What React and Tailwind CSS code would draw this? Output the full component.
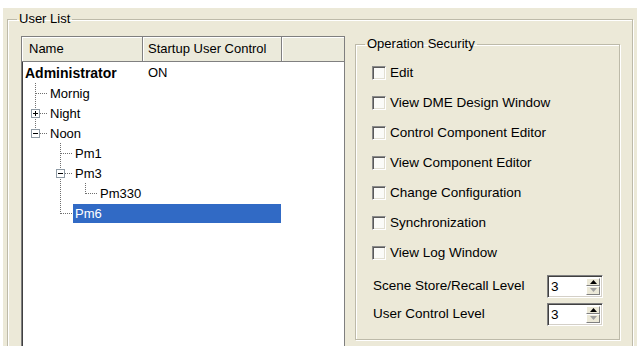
import React from 'react';

// dotted tree guide: one 25px cell of the indent column
function Guide({ type, box }) {
  const dot = { stroke: '#6F6F6F', strokeDasharray: '1 1', strokeWidth: 1, shapeRendering: 'crispEdges' };
  return (
    <svg width="25" height="20" className="shrink-0">
      {(type === 'pipe' || type === 'tee') && <line x1="10.5" y1="0" x2="10.5" y2="20" {...dot} />}
      {type === 'elbow' && <line x1="10.5" y1="0" x2="10.5" y2="11" {...dot} />}
      {(type === 'tee' || type === 'elbow') && <line x1="11" y1="10.5" x2="23" y2="10.5" {...dot} />}
      {box && (
        <g shapeRendering="crispEdges">
          <rect x="6.5" y="6.5" width="8" height="8" fill="white" stroke="#8E9AA4" />
          <line x1="8" y1="10.5" x2="13" y2="10.5" stroke="#000" />
          {box === 'plus' && <line x1="10.5" y1="8" x2="10.5" y2="13" stroke="#000" />}
        </g>
      )}
    </svg>
  );
}

const rows = [
  { name: 'Administrator', cells: [], bold: true, control: 'ON' },
  { name: 'Mornig', cells: [['tee']] },
  { name: 'Night', cells: [['tee', 'plus']] },
  { name: 'Noon', cells: [['elbow', 'minus']] },
  { name: 'Pm1', cells: [['blank'], ['tee']] },
  { name: 'Pm3', cells: [['blank'], ['tee', 'minus']] },
  { name: 'Pm330', cells: [['blank'], ['pipe'], ['elbow']] },
  { name: 'Pm6', cells: [['blank'], ['elbow']], selected: true },
];

const permissions = [
  'Edit',
  'View DME Design Window',
  'Control Component Editor',
  'View Component Editor',
  'Change Configuration',
  'Synchronization',
  'View Log Window',
];

function Checkbox() {
  return (
    <div className="w-[14px] h-[14px] shrink-0 bg-[#FBFBF8] border border-t-[#8A8A8A] border-l-[#8A8A8A] border-b-white border-r-white shadow-[inset_1px_1px_0_#5A5A5A,inset_-1px_-1px_0_#E2DFD2]" />
  );
}

function SpinBox({ value }) {
  return (
    <div className="w-[56px] h-[23px] flex bg-white border border-t-[#808080] border-l-[#808080] border-b-white border-r-white shadow-[inset_1px_1px_0_#404040,inset_-1px_-1px_0_#D4D0C8] p-[2px]">
      <div className="flex-1 pl-[1px] leading-[17px]">{value}</div>
      <div className="w-[14px] flex flex-col">
        <div className="h-[9px] flex items-center justify-center bg-[#ECE9D8] border border-t-white border-l-white border-b-[#808080] border-r-[#808080]">
          <svg width="7" height="4"><path d="M3.5 0 L7 4 L0 4 Z" fill="#000" /></svg>
        </div>
        <div className="h-[9px] flex items-center justify-center bg-[#ECE9D8] border border-t-white border-l-white border-b-[#808080] border-r-[#808080]">
          <svg width="7" height="4"><path d="M0 0 L7 0 L3.5 4 Z" fill="#A0A0A0" /></svg>
        </div>
      </div>
    </div>
  );
}

function UserTree() {
  return (
    <div className="w-[324px] h-[330px] shrink-0 bg-white border border-[#7F7F7F] shadow-[inset_1px_1px_0_#404040]">
      {/* column header */}
      <div className="flex h-[25px] bg-[#EBEADB]">
        <div className="w-[121px] pl-[7px] flex items-center border-r border-b border-[#808080] shadow-[inset_1px_1px_0_white]">Name</div>
        <div className="w-[139px] pl-[5px] flex items-center border-r border-b border-[#808080] shadow-[inset_1px_1px_0_white]">Startup User Control</div>
        <div className="flex-1 border-b border-[#808080] shadow-[inset_1px_1px_0_white]" />
      </div>
      <div className="pt-[1px]">
        {rows.map((r) => (
          <div key={r.name} className="flex h-[20px] items-center">
            <div className="w-[121px] shrink-0 flex items-center pl-[3px] h-full">
              {r.cells.map(([type, box], i) => (
                <Guide key={i} type={type} box={box} />
              ))}
              <span
                className={`shrink-0 -ml-[2px] pl-[2px] h-[19px] leading-[19px] ${r.bold ? 'font-bold text-[14px]' : ''} ${r.selected ? 'w-[208px] bg-[#316AC5] text-white' : ''}`}
              >
                {r.name}
              </span>
            </div>
            {r.control && <div className="pl-[5px]">{r.control}</div>}
          </div>
        ))}
      </div>
    </div>
  );
}

function OperationSecurity() {
  return (
    <fieldset className="w-[265px] shrink-0 p-0 m-0 border border-[#BDBAA9] shadow-[inset_1px_1px_0_white,1px_1px_0_white]">
      <legend className="ml-[9px] px-[2px] leading-[16px]">Operation Security</legend>
      <div className="pl-[16px] pr-[16px] pt-[6px] pb-[11px] text-[13.5px]">
        {permissions.map((p) => (
          <div key={p} className="h-[30px] flex items-center gap-[4px]">
            <Checkbox />
            <span>{p}</span>
          </div>
        ))}
        <div className="mt-[4px] h-[28px] flex items-center justify-between">
          <span className="pl-[1px]">Scene Store/Recall Level</span>
          <SpinBox value="3" />
        </div>
        <div className="h-[28px] flex items-center justify-between">
          <span className="pl-[1px]">User Control Level</span>
          <SpinBox value="3" />
        </div>
      </div>
    </fieldset>
  );
}

export default function App() {
  return (
    <div className="w-[637px] h-[346px] overflow-hidden bg-white pl-[3px] pt-[8px] font-['Liberation_Sans',Arial,sans-serif] text-[13px] text-black">
      <div className="h-[338px] bg-[#ECE9D8] pl-[4px] pt-[3px] overflow-hidden">
        <fieldset className="w-[626px] p-0 m-0 border border-[#BDBAA9] shadow-[inset_1px_1px_0_white,1px_1px_0_white]">
          <legend className="ml-[9px] px-[2px] leading-[16px]">User List</legend>
          <div className="flex items-start gap-[10px] pl-[13px] pt-[9px]">
            <UserTree />
            <OperationSecurity />
          </div>
        </fieldset>
      </div>
    </div>
  );
}
